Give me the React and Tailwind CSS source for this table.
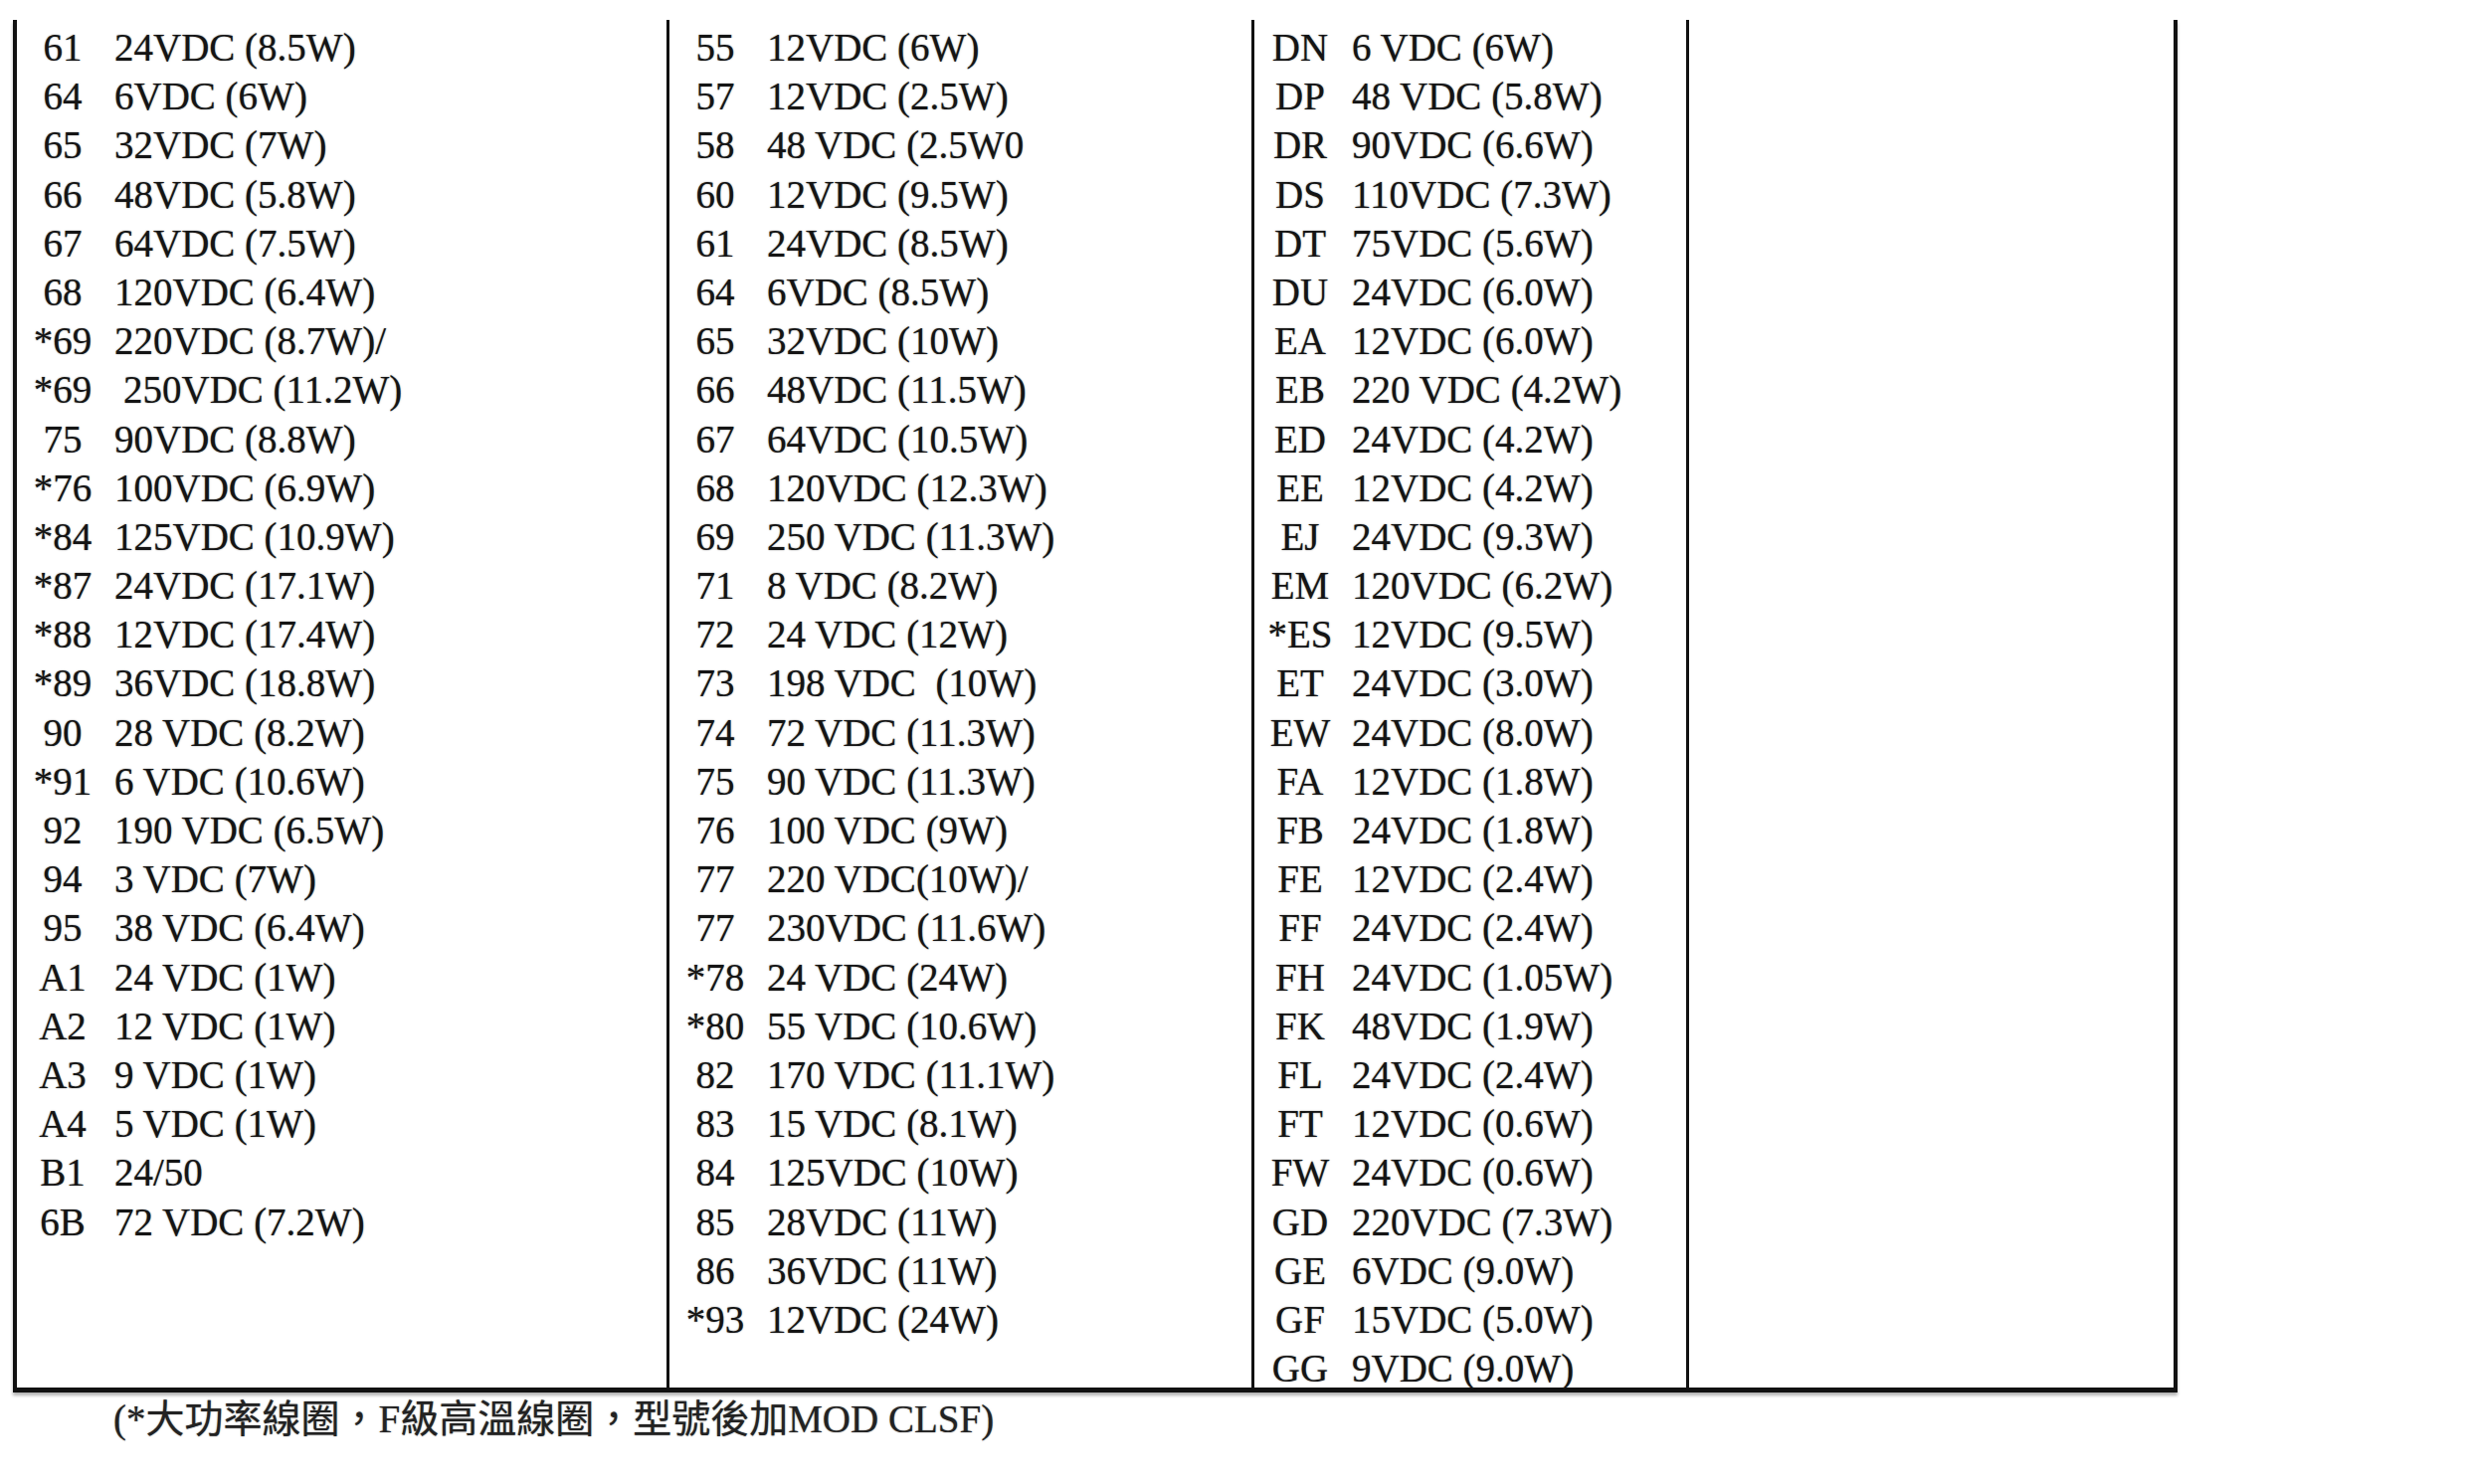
import React from 'react';

// 線圈電壓代碼表（三欄資料 + 一欄空白）
const col1 = [
  ['61', '24VDC (8.5W)'],
  ['64', '6VDC (6W)'],
  ['65', '32VDC (7W)'],
  ['66', '48VDC (5.8W)'],
  ['67', '64VDC (7.5W)'],
  ['68', '120VDC (6.4W)'],
  ['*69', '220VDC (8.7W)/'],
  ['*69', '250VDC (11.2W)', true],
  ['75', '90VDC (8.8W)'],
  ['*76', '100VDC (6.9W)'],
  ['*84', '125VDC (10.9W)'],
  ['*87', '24VDC (17.1W)'],
  ['*88', '12VDC (17.4W)'],
  ['*89', '36VDC (18.8W)'],
  ['90', '28 VDC (8.2W)'],
  ['*91', '6 VDC (10.6W)'],
  ['92', '190 VDC (6.5W)'],
  ['94', '3 VDC (7W)'],
  ['95', '38 VDC (6.4W)'],
  ['A1', '24 VDC (1W)'],
  ['A2', '12 VDC (1W)'],
  ['A3', '9 VDC (1W)'],
  ['A4', '5 VDC (1W)'],
  ['B1', '24/50'],
  ['6B', '72 VDC (7.2W)'],
];

const col2 = [
  ['55', '12VDC (6W)'],
  ['57', '12VDC (2.5W)'],
  ['58', '48 VDC (2.5W0'],
  ['60', '12VDC (9.5W)'],
  ['61', '24VDC (8.5W)'],
  ['64', '6VDC (8.5W)'],
  ['65', '32VDC (10W)'],
  ['66', '48VDC (11.5W)'],
  ['67', '64VDC (10.5W)'],
  ['68', '120VDC (12.3W)'],
  ['69', '250 VDC (11.3W)'],
  ['71', '8 VDC (8.2W)'],
  ['72', '24 VDC (12W)'],
  ['73', '198 VDC  (10W)'],
  ['74', '72 VDC (11.3W)'],
  ['75', '90 VDC (11.3W)'],
  ['76', '100 VDC (9W)'],
  ['77', '220 VDC(10W)/'],
  ['77', '230VDC (11.6W)'],
  ['*78', '24 VDC (24W)'],
  ['*80', '55 VDC (10.6W)'],
  ['82', '170 VDC (11.1W)'],
  ['83', '15 VDC (8.1W)'],
  ['84', '125VDC (10W)'],
  ['85', '28VDC (11W)'],
  ['86', '36VDC (11W)'],
  ['*93', '12VDC (24W)'],
];

const col3 = [
  ['DN', '6 VDC (6W)'],
  ['DP', '48 VDC (5.8W)'],
  ['DR', '90VDC (6.6W)'],
  ['DS', '110VDC (7.3W)'],
  ['DT', '75VDC (5.6W)'],
  ['DU', '24VDC (6.0W)'],
  ['EA', '12VDC (6.0W)'],
  ['EB', '220 VDC (4.2W)'],
  ['ED', '24VDC (4.2W)'],
  ['EE', '12VDC (4.2W)'],
  ['EJ', '24VDC (9.3W)'],
  ['EM', '120VDC (6.2W)'],
  ['*ES', '12VDC (9.5W)'],
  ['ET', '24VDC (3.0W)'],
  ['EW', '24VDC (8.0W)'],
  ['FA', '12VDC (1.8W)'],
  ['FB', '24VDC (1.8W)'],
  ['FE', '12VDC (2.4W)'],
  ['FF', '24VDC (2.4W)'],
  ['FH', '24VDC (1.05W)'],
  ['FK', '48VDC (1.9W)'],
  ['FL', '24VDC (2.4W)'],
  ['FT', '12VDC (0.6W)'],
  ['FW', '24VDC (0.6W)'],
  ['GD', '220VDC (7.3W)'],
  ['GE', '6VDC (9.0W)'],
  ['GF', '15VDC (5.0W)'],
  ['GG', '9VDC (9.0W)'],
];

function Columna({ filas, className }) {
  return (
    <div className={`pt-[3px] ${className}`}>
      {filas.map(([codigo, valor, extra], i) => (
        <div key={i} className="flex h-[49.2px] leading-[49.2px] whitespace-pre">
          <span className="w-[92px] shrink-0 text-center">{codigo}</span>
          <span className={extra ? 'ml-[15px]' : 'ml-[6px]'}>{valor}</span>
        </div>
      ))}
    </div>
  );
}

export default function App() {
  return (
    <div className="w-[2480px] h-[1492px] bg-white text-[#141414] font-['Liberation_Serif','Noto_Sans_CJK_TC',serif] text-[39px] [text-shadow:0_0_1.5px_rgba(0,0,0,0.55)] overflow-hidden">
      <div className="ml-[13px] mt-[20px] w-[2176px] h-[1380px] flex border-l-4 border-r-4 border-b-[5px] border-[#111] shadow-[0_3px_3px_rgba(0,0,0,0.3)]">
        <Columna filas={col1} className="w-[653px]" />
        <Columna filas={col2} className="w-[588px] border-l-[3px] border-[#111]" />
        <Columna filas={col3} className="w-[437px] border-l-[3px] border-[#111]" />
        <div className="w-[490px] border-l-[3px] border-[#111]" />
      </div>
      <p className="ml-[114px] mt-[7px] leading-[40px] text-[39px] text-[#222]">(*大功率線圈，F級高溫線圈，型號後加MOD CLSF)</p>
    </div>
  );
}
